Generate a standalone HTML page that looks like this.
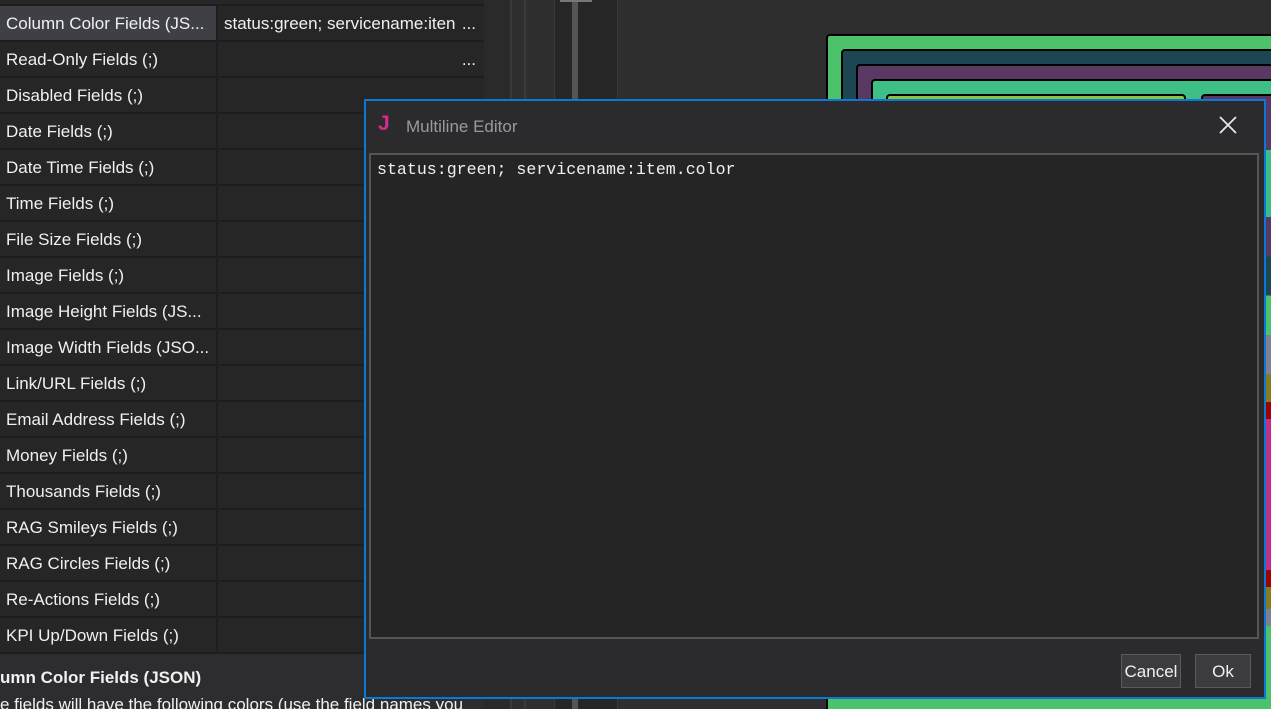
<!DOCTYPE html>
<html style="width:1271px;height:709px;overflow:hidden"><head><meta charset="utf-8"><style>
*{margin:0;padding:0;box-sizing:border-box}
body{width:1271px;height:709px;overflow:hidden;background:#2e2e2e;font-family:"Liberation Sans",sans-serif;position:relative;color:#f0f0f0}
.row{position:absolute;left:0;width:484px;height:34px;font-size:17px;line-height:36px}
.row .l{position:absolute;left:0;width:216px;height:34px;background:#262626;padding-left:6px;white-space:nowrap;overflow:hidden}
.row .v{position:absolute;left:218px;width:266px;height:34px;background:#262626;padding-left:6px;white-space:nowrap}
.b{position:absolute;border:2px solid #000;border-radius:4px}
</style></head><body>
<div style="position:absolute;left:0;top:0;width:484px;height:654px;background:#1e1e1e"></div>
<div style="position:absolute;left:0;top:0;width:484px;height:4px;background:#262626"></div>
<div class="row" style="top:6px"><div class="l" style="background:#3f3f46">Column Color Fields (JS...</div><div class="v">status:green; servicename:iten<span style="position:absolute;right:8px">...</span></div></div>
<div class="row" style="top:42px"><div class="l">Read-Only Fields (;)</div><div class="v"><span style="position:absolute;right:8px">...</span></div></div>
<div class="row" style="top:78px"><div class="l">Disabled Fields (;)</div><div class="v"></div></div>
<div class="row" style="top:114px"><div class="l">Date Fields (;)</div><div class="v"></div></div>
<div class="row" style="top:150px"><div class="l">Date Time Fields (;)</div><div class="v"></div></div>
<div class="row" style="top:186px"><div class="l">Time Fields (;)</div><div class="v"></div></div>
<div class="row" style="top:222px"><div class="l">File Size Fields (;)</div><div class="v"></div></div>
<div class="row" style="top:258px"><div class="l">Image Fields (;)</div><div class="v"></div></div>
<div class="row" style="top:294px"><div class="l">Image Height Fields (JS...</div><div class="v"></div></div>
<div class="row" style="top:330px"><div class="l">Image Width Fields (JSO...</div><div class="v"></div></div>
<div class="row" style="top:366px"><div class="l">Link/URL Fields (;)</div><div class="v"></div></div>
<div class="row" style="top:402px"><div class="l">Email Address Fields (;)</div><div class="v"></div></div>
<div class="row" style="top:438px"><div class="l">Money Fields (;)</div><div class="v"></div></div>
<div class="row" style="top:474px"><div class="l">Thousands Fields (;)</div><div class="v"></div></div>
<div class="row" style="top:510px"><div class="l">RAG Smileys Fields (;)</div><div class="v"></div></div>
<div class="row" style="top:546px"><div class="l">RAG Circles Fields (;)</div><div class="v"></div></div>
<div class="row" style="top:582px"><div class="l">Re-Actions Fields (;)</div><div class="v"></div></div>
<div class="row" style="top:618px"><div class="l">KPI Up/Down Fields (;)</div><div class="v"></div></div>
<div style="position:absolute;left:0;top:654px;width:510px;height:55px;background:#2d2d30;font-size:17px">
<div style="position:absolute;left:0;top:14px;font-weight:bold">umn Color Fields (JSON)</div>
<div style="position:absolute;left:0;top:41px;white-space:nowrap">e fields will have the following colors (use the field names you</div></div>
<div style="position:absolute;left:484px;top:0;width:26px;height:709px;background:#2a2a2a"></div>
<div style="position:absolute;left:510px;top:0;width:2px;height:709px;background:#3a3a3a"></div>
<div style="position:absolute;left:524px;top:0;width:2px;height:709px;background:#3a3a3a"></div>
<div style="position:absolute;left:554px;top:0;width:64px;height:709px;background:#262626;border-left:1px solid #3a3a3a;border-right:1px solid #3a3a3a"></div>
<div style="position:absolute;left:572px;top:0;width:6px;height:709px;background:#555"></div>
<div style="position:absolute;left:560px;top:0;width:32px;height:2px;background:#777"></div>
<div style="position:absolute;left:0;top:0;width:1271px;height:709px;overflow:hidden">
<div class="b" style="left:826px;top:34px;width:460px;height:690px;background:#4cc36a"></div>
<div class="b" style="left:841px;top:49px;width:440px;height:640px;background:#1c4654"></div>
<div class="b" style="left:856px;top:64px;width:420px;height:620px;background:#5a3864"></div>
<div class="b" style="left:871px;top:79px;width:420px;height:600px;background:#3dbf85"></div>
<div class="b" style="left:886px;top:94px;width:300px;height:20px;background:#8cc63f"></div>
<div class="b" style="left:1201px;top:94px;width:80px;height:100px;background:#5a3864"></div>
<div style="position:absolute;left:1264px;top:150px;width:7px;height:560px;background:linear-gradient(#3dbf85 0 12%,#5a3864 12% 19%,#1c4654 19% 26%,#4cc36a 26% 33%,#808090 33% 40%,#8a7a20 40% 45%,#a00000 45% 48%,#c0308a 48% 75%,#a00000 75% 78%,#8a7a20 78% 82%,#808090 82% 85%,#4cc36a 85%)"></div>
</div>
<div style="position:absolute;left:364px;top:99px;width:902px;height:600px;background:#2b2b2d;border:2px solid #0a78d4">
<div style="position:absolute;left:12px;top:11px;color:#d62a8e;font-weight:bold;font-size:21px">J</div>
<div style="position:absolute;left:40px;top:16px;color:#9a9a9a;font-size:17px">Multiline Editor</div>
<svg style="position:absolute;left:852px;top:14px" width="20" height="20"><path d="M2 2L18 18M18 2L2 18" stroke="#e6e6e6" stroke-width="1.8"/></svg>
<div style="position:absolute;left:3px;top:52px;width:890px;height:486px;background:#252525;border:2px solid #555;font-family:'Liberation Mono',monospace;font-size:16.6px;padding:5px 6px">status:green; servicename:item.color</div>
<div style="position:absolute;left:755px;top:553px;width:60px;height:34px;background:#3c3c40;border:1px solid #5a5a5a;font-size:17px;line-height:34px;text-align:center">Cancel</div>
<div style="position:absolute;left:829px;top:553px;width:56px;height:34px;background:#3c3c40;border:1px solid #5a5a5a;font-size:17px;line-height:34px;text-align:center">Ok</div>
</div>
</body></html>
